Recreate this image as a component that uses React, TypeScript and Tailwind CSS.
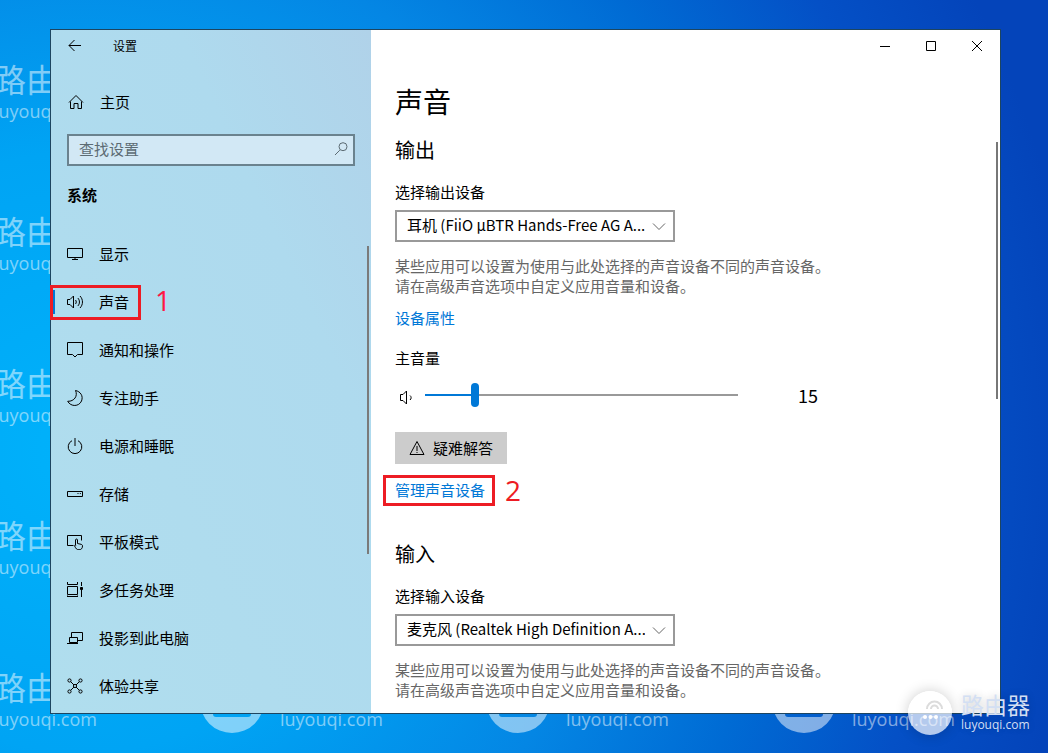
import { useState } from 'react';
import type { ReactNode } from 'react';
import { clsx } from 'clsx';

const ICONS: Record<string, ReactNode> = {
  display: (
    <path d="M.5 2.5h15v9H.5zM8 11.5v2M5 13.5h6" />
  ),
  sound: (
    <path d="M.5 5.500h2.500L6.500 2v12L3 10.500H.5zM8.500 6c1 1.200 1 2.800 0 4M10.800 4c2.200 2.200 2.200 5.800 0 8M13 2c3.300 3.400 3.300 8.600 0 12" />
  ),
  notify: <path d="M.5 .5h15v12h-5L8 15l-2.500-2.500h-5z" />,
  moon: <path d="M8.500 .5C11 5.800 7.500 11.500 .7 11.300 3.800 17 12 16.800 14.500 11 16.500 6 13.500 1.500 8.500 .5z" />,
  power: <path d="M8 0v8M5 2.700A6.800 6.800 0 1 0 11 2.700" />,
  storage: <path d="M.5 5.500h15v5H.5zM10.500 7.500h1M12.800 7.500h1" />,
  tablet: (
    <path d="M6.500 11.500h-6v-10h14v5M8.500 11V6c0-1.300 2-1.300 2 0v3.500l3.500.8c1 .3 1.500.7 1.500 1.700 0 2.500-1.500 3.800-3.500 3.800-2.200 0-3-1-4.500-4 .3-.9 1-.9 1.500 0" />
  ),
  multitask: (
    <>
      <path d="M.5 0v2.500h10V0M.5 4.500h10v8H.5zM.5 15v-1.500M0 14.500h11M10.500 15v-1.500M14.500 0v4M14.500 8v7" />
      <path d="M13.500 5.500h2v2h-2z" fill="currentColor" />
    </>
  ),
  project: <path d="M4.500 7V2.500h11v8H11M2.500 7.500h8v5h-8zM0 13.500h11" />,
  share: (
    <>
      <path d="M3.800 3.800l8.400 8.400M12.200 3.800l-8.400 8.400" />
      <circle cx="2.500" cy="2.500" r="1.600" />
      <circle cx="13.500" cy="2.500" r="1.600" />
      <circle cx="2.500" cy="13.500" r="1.600" />
      <circle cx="13.500" cy="13.500" r="1.600" />
      <circle cx="8" cy="8" r="1.600" fill="#b0dcee" />
    </>
  ),
  home: <path d="M1 8.500L8 1.500l7 7M2.500 7.500v7h3.500v-5h4v5h3.500v-7" />,
  back: <path d="M14 7.500H2M7.500 2L2 7.500 7.500 13" />,
  search: <path d="M6.800 9.200L2 14M14 5.700a4 4 0 1 1-8 0 4 4 0 0 1 8 0z" />,
  volume: <path d="M2.500 5.500H5L8.500 2v13L5 11.500H2.500zM12 6.500c1.500 1.200 1.500 3.300 0 4.500" />,
  warning: <path d="M8 1.500l7 13H1zM8 6v5M8 12v1" />,
  chevron: <path d="M2 5.500l6 6 6-6" />,
  minimize: <path d="M3 8.500h10" />,
  maximize: <path d="M3.500 3.500h9v9h-9z" />,
  close: <path d="M3 3l10 10M13 3L3 13" />,
};

const NAV_ITEMS = [
  { icon: 'display', label: '显示' },
  { icon: 'sound', label: '声音' },
  { icon: 'notify', label: '通知和操作' },
  { icon: 'moon', label: '专注助手' },
  { icon: 'power', label: '电源和睡眠' },
  { icon: 'storage', label: '存储' },
  { icon: 'tablet', label: '平板模式' },
  { icon: 'multitask', label: '多任务处理' },
  { icon: 'project', label: '投影到此电脑' },
  { icon: 'share', label: '体验共享' },
];

const WINDOW_BUTTONS = [
  { icon: 'minimize', label: '最小化' },
  { icon: 'maximize', label: '最大化' },
  { icon: 'close', label: '关闭' },
];

// marks per row: only the last row shows below the window
const WATERMARK_ROWS = [1, 1, 1, 1, 4];

function Icon({ name, className }: { name: string; className?: string }) {
  return (
    <svg
      viewBox="0 0 16 16"
      fill="none"
      stroke="currentColor"
      className={clsx('size-4 shrink-0', className)}
      aria-hidden="true"
    >
      {ICONS[name]}
    </svg>
  );
}

function Watermarks() {
  return (
    <div className="absolute top-[57px] left-[-86px] text-white/50" aria-hidden="true">
      {WATERMARK_ROWS.map((count, row) => (
        <div key={row} className="flex h-[152px]">
          {Array.from({ length: count }, (_, i) => (
            <div key={i} className="flex w-[286px] shrink-0 gap-4">
              <svg viewBox="0 0 64 64" className="mt-1 size-16 shrink-0" fill="currentColor">
                <path
                  fillRule="evenodd"
                  d="M32 0a32 32 0 1 1 0 64 32 32 0 0 1 0-64zM13 32v13q0 3 3 3h32q3 0 3-3V32z"
                />
              </svg>
              <div>
                {/* the name is behind the window in every column but the first */}
                <p className="h-11 text-[32px] leading-[46px]">{i === 0 && '路由器'}</p>
                <p className="text-lg leading-5">luyouqi.com</p>
              </div>
            </div>
          ))}
        </div>
      ))}
    </div>
  );
}

function SiteLogo() {
  return (
    <div className="absolute right-[18px] bottom-[18px] flex items-center gap-[9px]">
      <svg
        viewBox="0 0 44 44"
        className="size-11 rounded-full bg-white/70 shadow-[0_0_14px_rgba(0,0,0,0.2)]"
        fill="none"
        aria-hidden="true"
      >
        <path d="M0 22a22 22 0 0 1 44 0z" fill="#fff" />
        <g stroke="#dcdcdc" strokeWidth="2">
          <path d="M19 18a7.500 7.500 0 1 1 15 0" />
          <path d="M23 18a3.500 3.500 0 1 1 7 0" />
        </g>
        <g fill="#fff">
          <circle cx="17" cy="26" r="2" />
          <circle cx="22.500" cy="26" r="2" />
          <circle cx="28" cy="26" r="2" />
        </g>
      </svg>
      <div className="text-[#d3dff3] [text-shadow:0_0_8px_rgba(0,0,0,0.2)]">
        <p className="text-[23px] leading-6">路由器</p>
        <p className="text-xs leading-4">luyouqi.com</p>
      </div>
    </div>
  );
}

function Sidebar() {
  return (
    <aside className="relative w-80 shrink-0 bg-linear-to-bl from-[#b0d2e9] via-[#aedaee] via-30% to-[#b0deee]">
      <div className="flex h-8 items-center gap-[30px] px-4">
        <button type="button" aria-label="返回">
          <Icon name="back" />
        </button>
        <span className="pt-0.5 text-xs">设置</span>
      </div>
      <a href="#home" className="mt-4 flex h-12 items-center gap-4 px-[17px]">
        <Icon name="home" />
        主页
      </a>
      <label className="mx-4 mt-2 flex h-8 items-center border-2 border-[#6a828e] bg-[#d2e8f5] pr-1 pb-0.5 pl-[10px] text-[#5c6b73]">
        <input
          type="text"
          aria-label="查找设置"
          placeholder="查找设置"
          className="min-w-0 flex-1 bg-transparent outline-none placeholder:text-[#5c6b73]"
        />
        <Icon name="search" />
      </label>
      <h2 className="mt-[19px] px-4 leading-5 font-bold">系统</h2>
      <nav className="mt-[25px]">
        {NAV_ITEMS.map(({ icon, label }) => {
          const active = icon === 'sound';
          return (
            <a key={icon} href={`#${icon}`} className="relative flex h-12 items-center gap-4 px-4">
              {active && <span className="absolute top-3 left-0 h-6 w-1 bg-[#0078d7]" />}
              <Icon name={icon} />
              {label}
              {active && (
                <>
                  <span className="absolute top-[7px] -left-px h-[35px] w-[91px] border-3 border-[#ed1c24]" />
                  <span className="absolute left-[104px] pb-1 text-[28px] text-[#ff1744]">1</span>
                </>
              )}
            </a>
          );
        })}
      </nav>
      <span className="absolute top-[216px] right-0.5 h-[308px] w-0.5 bg-[#7a7a7a]" />
    </aside>
  );
}

interface DeviceSectionProps {
  id: string;
  title: string;
  label: string;
  device: string;
}

function DeviceSection({ id, title, label, device }: DeviceSectionProps) {
  return (
    <>
      <h2 className="text-xl leading-7">{title}</h2>
      <label htmlFor={id} className="mt-[17px] block leading-5">
        {label}
      </label>
      <div className="relative mt-2 w-[280px]">
        <select
          id={id}
          className="h-8 w-full appearance-none border-2 border-[#999] bg-white pr-7 pb-0.5 pl-[10px] font-['Noto_Sans_CJK_SC',sans-serif] outline-none"
        >
          <option>{device}</option>
        </select>
        <Icon name="chevron" className="pointer-events-none absolute top-2 right-2 text-[#666]" />
      </div>
      <p className="mt-[14px] max-w-[440px] leading-5 text-[#666]">
        某些应用可以设置为使用与此处选择的声音设备不同的声音设备。请在高级声音选项中自定义应用音量和设备。
      </p>
    </>
  );
}

function VolumeSlider() {
  const [volume, setVolume] = useState(15);

  return (
    <>
      <label htmlFor="volume" className="mt-5 block leading-5">
        主音量
      </label>
      <div className="mt-[15px] flex h-6 items-center">
        <Icon name="volume" className="mx-[3px] mt-1" />
        <input
          id="volume"
          type="range"
          min={0}
          max={100}
          value={volume}
          onChange={(e) => setVolume(Number(e.target.value))}
          style={{
            backgroundImage: `linear-gradient(to right, #0078d7 ${volume}%, #999 ${volume}%)`,
          }}
          className="ml-2 h-6 w-[313px] appearance-none bg-size-[100%_2px] bg-center bg-no-repeat [&::-webkit-slider-thumb]:h-6 [&::-webkit-slider-thumb]:w-2 [&::-webkit-slider-thumb]:appearance-none [&::-webkit-slider-thumb]:rounded-full [&::-webkit-slider-thumb]:bg-[#0078d7]"
        />
        <output htmlFor="volume" className="w-[140px] text-center font-['Noto_Sans_CJK_SC',sans-serif] text-lg">
          {volume}
        </output>
      </div>
    </>
  );
}

export default function App() {
  return (
    <div className="relative flex min-h-screen overflow-hidden bg-[radial-gradient(circle_at_8%_60%,#00b2fb,#00a4f4_300px,#0486e4_530px,#006bd4_700px,#0450c6_860px,#0444ba_1000px)] pt-[29px] pr-[47px] pb-[39px] pl-[50px] font-['Open_Sans','Noto_Sans_CJK_SC',sans-serif] text-[15px] text-black">
      <Watermarks />
      <div className="relative flex flex-1 border border-[#1d4560] bg-white">
        <Sidebar />
        <main className="relative min-w-0 flex-1 pl-6">
          <div className="flex h-8 justify-end">
            {WINDOW_BUTTONS.map(({ icon, label }) => (
              <button
                key={icon}
                type="button"
                aria-label={label}
                className="flex w-[46px] items-center justify-center"
              >
                <Icon name={icon} />
              </button>
            ))}
          </div>
          <h1 className="mt-5 mb-[15px] text-[28px] leading-10">声音</h1>
          <DeviceSection
            id="output-device"
            title="输出"
            label="选择输出设备"
            device="耳机 (FiiO µBTR Hands-Free AG A..."
          />
          <a href="#properties" className="mt-3 block w-fit leading-5 text-[#0078d7]">
            设备属性
          </a>
          <VolumeSlider />
          <button
            type="button"
            className="mt-[25px] flex h-8 w-28 items-center justify-center gap-2 bg-[#ccc]"
          >
            <Icon name="warning" />
            疑难解答
          </button>
          <div className="relative mt-4 mb-[41px] flex h-5 items-center">
            <a href="#manage" className="leading-5 text-[#0078d7]">
              管理声音设备
            </a>
            <span className="absolute top-[-5px] -left-3 h-[31px] w-28 border-3 border-[#ed1c24]" />
            <span className="absolute left-[110px] text-[28px] text-[#ed1c24]">2</span>
          </div>
          <DeviceSection
            id="input-device"
            title="输入"
            label="选择输入设备"
            device="麦克风 (Realtek High Definition A..."
          />
          <span className="absolute top-28 right-0.5 h-[257px] w-0.5 bg-[#777]" />
        </main>
      </div>
      <SiteLogo />
    </div>
  );
}
